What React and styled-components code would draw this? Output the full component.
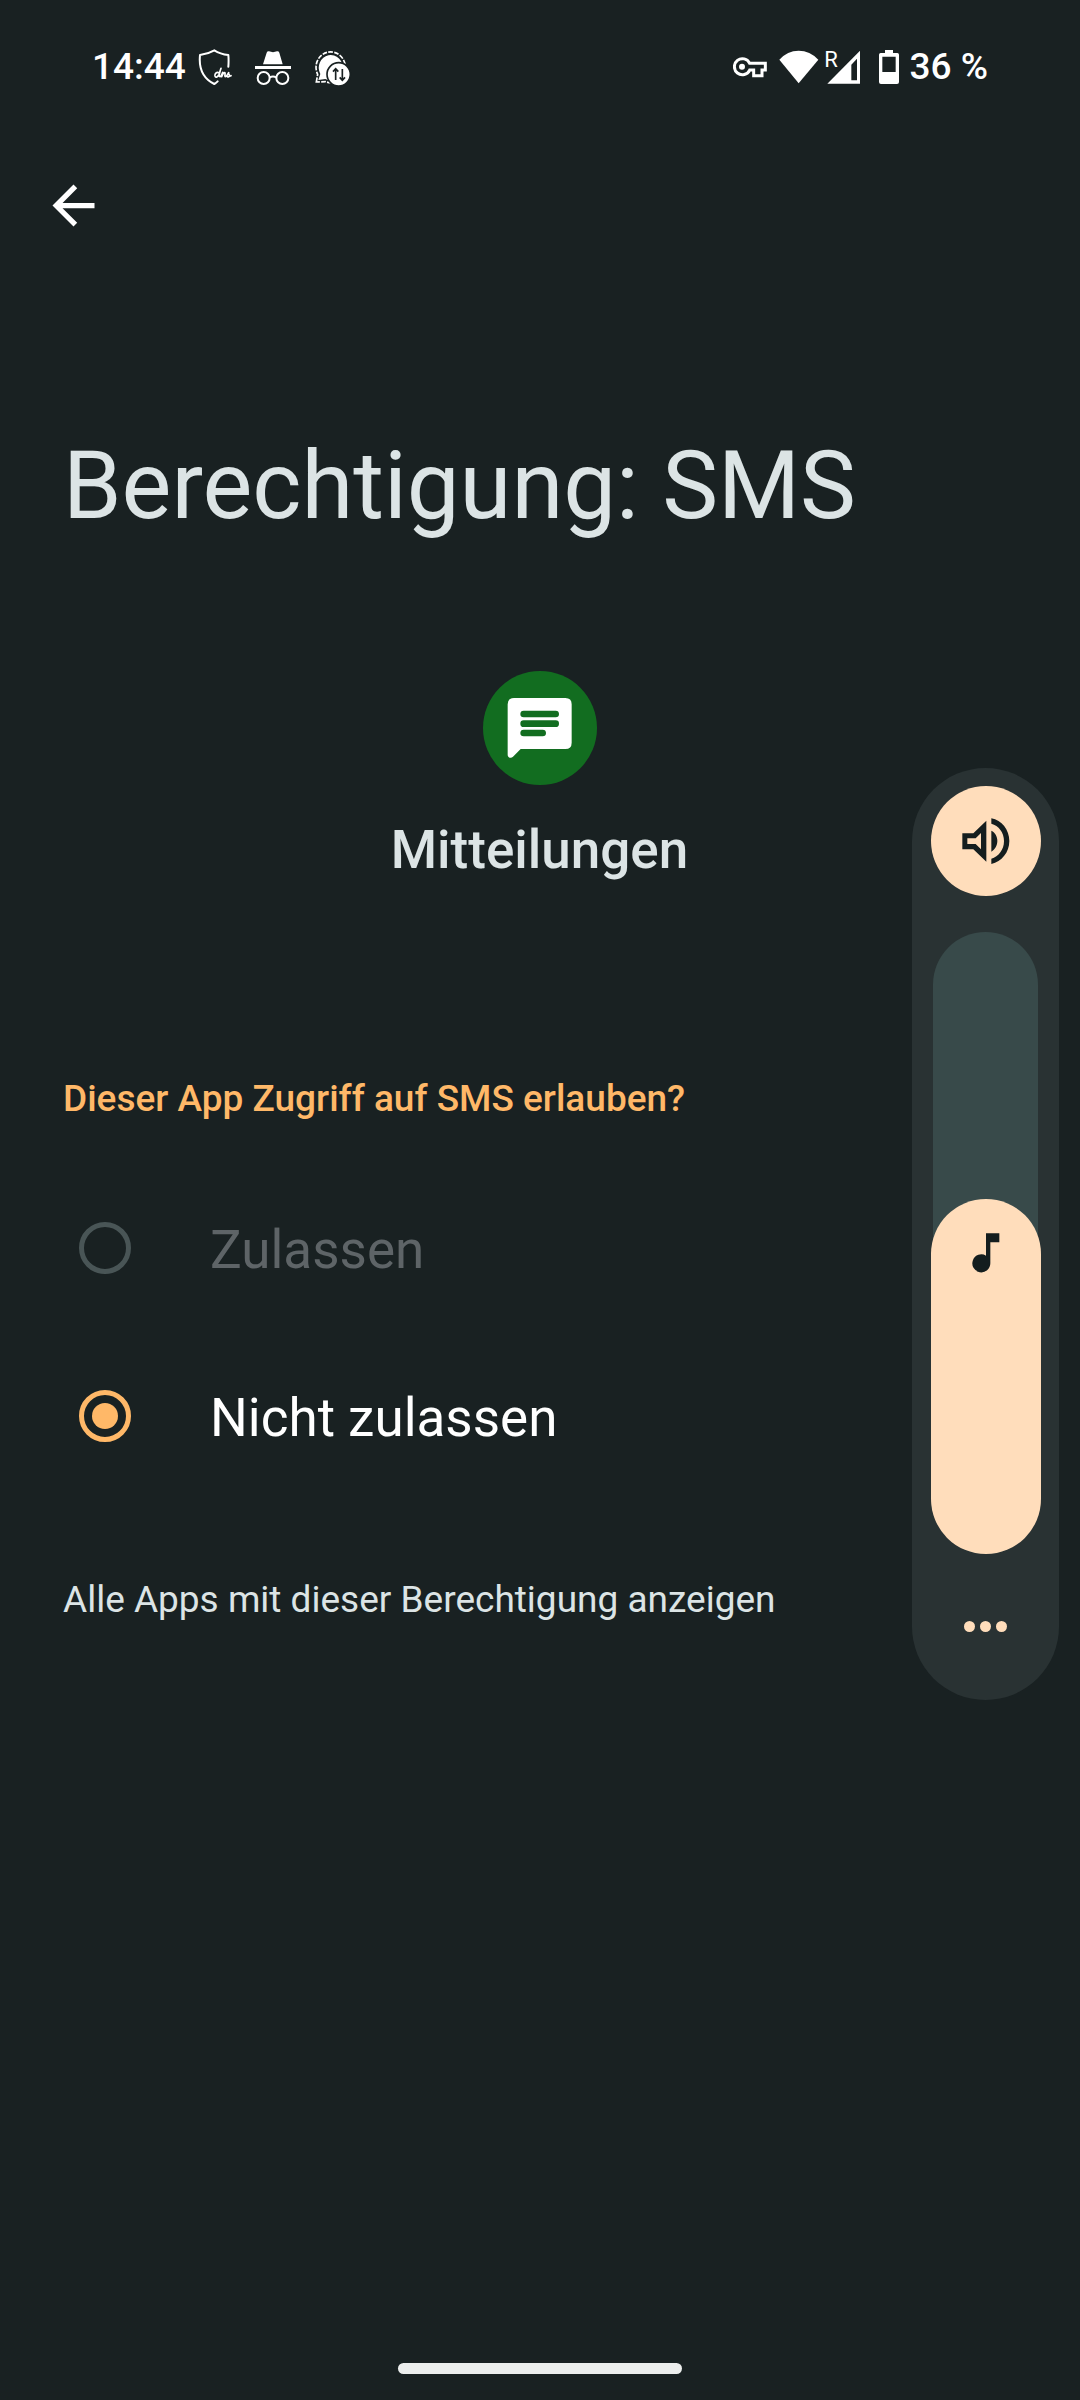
import { useState } from 'react';
import styled, { createGlobalStyle } from 'styled-components';

export default function App() {
  const [permission, setPermission] = useState('deny');
  const [volume, setVolume] = useState(57);

  return (
    <>
      <GlobalStyle />
      <Screen>
        <StatusBar>
          <StatusGroup>
            <StatusText>14:44</StatusText>
            <Notifications>
              <DnsIcon />
              <IncognitoIcon />
              <BackupIcon />
            </Notifications>
          </StatusGroup>
          <StatusGroup>
            <KeyIcon />
            <Network>
              <WifiIcon />
              <SignalIcon />
            </Network>
            <Battery>
              <BatteryIcon />
              <StatusText>36 %</StatusText>
            </Battery>
          </StatusGroup>
        </StatusBar>

        <TopBar>
          <BackButton type="button" aria-label="Zurück">
            <svg width="63" height="63" viewBox="0 0 24 24" fill="currentColor">
              <path d="M20 11H7.83l5.59-5.59L12 4l-8 8 8 8 1.41-1.41L7.83 13H20v-2z" />
            </svg>
          </BackButton>
        </TopBar>

        <Content>
          <Title>Berechtigung: SMS</Title>
          <AppInfo>
            <MessagesIcon />
            <AppName>Mitteilungen</AppName>
          </AppInfo>
          <Permission>
            <Question>Dieser App Zugriff auf SMS erlauben?</Question>
            <Option $disabled>
              <Radio type="radio" name="permission" value="allow" disabled />
              <OptionText>Zulassen</OptionText>
            </Option>
            <Option>
              <Radio
                type="radio"
                name="permission"
                value="deny"
                checked={permission === 'deny'}
                onChange={() => setPermission('deny')}
              />
              <OptionText>Nicht zulassen</OptionText>
            </Option>
          </Permission>
          <AllApps href="#apps">Alle Apps mit dieser Berechtigung anzeigen</AllApps>
        </Content>

        <NavBar>
          <HomeHandle />
        </NavBar>

        <VolumePanel>
          <SoundButton type="button" aria-label="Klingelton">
            <SpeakerIcon />
          </SoundButton>
          <Slider>
            <SliderLevel style={{ height: `${volume}%` }}>
              <NoteIcon />
            </SliderLevel>
            <SliderInput
              type="range"
              aria-label="Medienlautstärke"
              min="18"
              max="100"
              value={volume}
              onChange={(event) => setVolume(Number(event.target.value))}
            />
          </Slider>
          <MoreButton type="button" aria-label="Mehr">
            <Dot />
            <Dot />
            <Dot />
          </MoreButton>
        </VolumePanel>
      </Screen>
    </>
  );
}

function DnsIcon() {
  return (
    <svg width="34" height="38" viewBox="354 56 102 114" fill="none">
      <path
        d="M445 112c1-12 1-24 0-35-17-2-31-7-42-14-12 7-26 12-43 14-4 38 9 70 43 87 4-2 7-5 10-8"
        stroke="#fff"
        strokeWidth="6"
        strokeLinejoin="round"
        strokeLinecap="round"
      />
      <path
        d="M417 130c-8-3-13 4-12 10 2 6 9 3 12-5l6-18c-3 9-8 24-3 25 4 0 6-8 8-13l-3 13c3-7 6-12 9-12 4 1-2 11 2 12 4-1 7-6 10-12-2 6 5 6 2 11-2 3-6 2-7 0 4 2 7 0 12-2"
        stroke="#fff"
        strokeWidth="5"
        strokeLinejoin="round"
        strokeLinecap="round"
      />
    </svg>
  );
}

function IncognitoIcon() {
  return (
    <svg width="38" height="38" viewBox="522 56 114 114">
      <path
        d="M549 105l11-35q2-5 7-4l12 3 12-3q5-1 7 4l10 35zM525 110h108v9H525z"
        fill="#fff"
      />
      <g fill="none" stroke="#fff" strokeWidth="6">
        <circle cx="551" cy="146" r="18" />
        <circle cx="607" cy="146" r="18" />
        <path d="M569 144q10-5 20 0" />
      </g>
    </svg>
  );
}

function BackupIcon() {
  return (
    <svg width="38" height="38" viewBox="700 56 114 114">
      <path
        d="M707 158l4-23a44 46 0 1 1 24 22z"
        fill="none"
        stroke="#fff"
        strokeWidth="5"
        strokeDasharray="14 4"
      />
      <path d="M713 152l6-18a36 38 0 1 1 15 15z" fill="#fff" />
      <circle cx="774" cy="135" r="35" fill="#fff" stroke="#192122" strokeWidth="5" />
      <path
        d="M765 152v-33m-8 8l8-9 8 9M785 119v33m-8-8l8 9 8-9"
        fill="none"
        stroke="#192122"
        strokeWidth="5"
      />
    </svg>
  );
}

function KeyIcon() {
  return (
    <svg width="34" height="22" viewBox="71 81 102 66">
      <path
        d="M121 103a24 24 0 1 0 0 20h12v17h25v-17h10v-20z"
        fill="none"
        stroke="#fff"
        strokeWidth="9"
      />
      <circle cx="98" cy="113" r="9" fill="#fff" />
    </svg>
  );
}

function WifiIcon() {
  return (
    <svg width="40" height="34" viewBox="209 58 120 102">
      <path d="M268 158L210 87q24-27 58-27t59 27z" fill="#fff" />
    </svg>
  );
}

function SignalIcon() {
  return (
    <svg width="38" height="54" viewBox="339 28 114 162">
      <path d="M450 60v99H352zM441 84l-17 18v47h17z" fill="#fff" fillRule="evenodd" />
      <SignalLabel x="343" y="109">
        R
      </SignalLabel>
    </svg>
  );
}

function BatteryIcon() {
  return (
    <svg width="20" height="34" viewBox="507 57 60 102">
      <path
        d="M525 57h24v9h13q5 0 5 5v82q0 6-6 6h-48q-6 0-6-6V71q0-5 5-5h13zM517 77v46h40V77z"
        fill="#fff"
        fillRule="evenodd"
      />
    </svg>
  );
}

function MessagesIcon() {
  return (
    <svg width="114" height="114" viewBox="336 62 342 342">
      <circle cx="507" cy="233" r="171" fill="#126d20" />
      <path
        d="M429 143h154q19 0 19 19v115q0 19-19 19H449l-23 23c-6 6-16 3-16-6V162q0-19 19-19z"
        fill="#fff"
      />
      <path
        d="M458 191h96M458 220h96M458 248h57"
        stroke="#126d20"
        strokeWidth="20"
        strokeLinecap="round"
      />
    </svg>
  );
}

function SpeakerIcon() {
  return (
    <svg width="48" height="46" viewBox="215 202 144 138">
      <path
        d="M216 248h33l39-38v123l-39-37h-33zM231 263v17h25l16 16v-49l-16 16z"
        fill="#141d1e"
        fillRule="evenodd"
      />
      <path
        d="M303 240c12 6 18 18 18 31s-7 26-18 32zM303 203c31 6 54 34 54 68s-23 62-54 69v-16c22-6 38-27 38-53s-16-46-38-52z"
        fill="#141d1e"
      />
    </svg>
  );
}

function NoteIcon() {
  return (
    <svg width="28" height="40" viewBox="245 154 84 120">
      <path d="M287 155h40v27h-27v63a27 27 0 1 1-13-23z" fill="#141d1e" />
    </svg>
  );
}

const GlobalStyle = createGlobalStyle`
  * {
    box-sizing: border-box;
  }
  body {
    background-color: #192122;
    color: #dce4e5;
    font-family: Roboto, sans-serif;
    margin: 0;
  }
  button {
    background: none;
    border: 0;
    color: inherit;
    cursor: pointer;
    padding: 0;
  }
  svg {
    display: block;
    flex-shrink: 0;
  }
`;

const Screen = styled.div`
  display: flex;
  flex-direction: column;
  min-height: 100vh;
  position: relative;
`;

const StatusBar = styled.header`
  align-items: center;
  color: #fff;
  display: flex;
  height: 134px;
  justify-content: space-between;
  padding: 0 92px;
`;

const StatusGroup = styled.div`
  align-items: center;
  display: flex;
  gap: 12px;
`;

const StatusText = styled.span`
  font-size: 37px;
  font-weight: 500;
  line-height: 44px;
`;

const Notifications = styled.div`
  align-items: center;
  display: flex;
  gap: 22px;
`;

const Network = styled.div`
  align-items: center;
  display: flex;
  gap: 4px;
`;

const Battery = styled.div`
  align-items: center;
  display: flex;
  gap: 11px;
  margin-left: 6px;
`;

const SignalLabel = styled.text`
  fill: #fff;
  font-size: 66px;
`;

const TopBar = styled.nav`
  display: flex;
  padding: 40px 42px 0;
`;

const BackButton = styled.button`
  color: #fff;
`;

const Content = styled.main`
  display: flex;
  flex-direction: column;
  padding: 193px 64px 0 63px;
`;

const Title = styled.h1`
  font-size: 94px;
  font-weight: 400;
  line-height: 112px;
  margin: 0;
`;

const AppInfo = styled.section`
  align-items: center;
  display: flex;
  flex-direction: column;
  gap: 35px;
  margin-top: 129px;
`;

const AppName = styled.h2`
  font-size: 53px;
  font-weight: 500;
  line-height: 60px;
  margin: 0;
`;

const Permission = styled.fieldset`
  border: 0;
  margin: 197px 0 0;
  padding: 0;
`;

const Question = styled.legend`
  color: #ffb868;
  font-size: 37px;
  font-weight: 500;
  line-height: 44px;
  margin-bottom: 43px;
  padding: 0;
`;

const Option = styled.label`
  align-items: center;
  color: ${({ $disabled }) => ($disabled ? '#5e6467' : '#fff')};
  display: flex;
  font-size: 53px;
  gap: 79px;
  height: 168px;
  line-height: 60px;
  padding-left: 16px;
`;

const OptionText = styled.span`
  padding-top: 4px;
`;

const Radio = styled.input`
  appearance: none;
  border: 5px solid #ffb868;
  border-radius: 50%;
  display: grid;
  flex-shrink: 0;
  height: 52px;
  margin: 0;
  place-content: center;
  width: 52px;
  &:checked::before {
    background-color: #ffb868;
    border-radius: 50%;
    content: '';
    height: 26px;
    width: 26px;
  }
  &:disabled {
    border-color: #495556;
  }
`;

const AllApps = styled.a`
  align-self: flex-start;
  color: inherit;
  font-size: 37px;
  line-height: 44px;
  margin-top: 78px;
  text-decoration: none;
`;

const NavBar = styled.footer`
  display: flex;
  justify-content: center;
  margin-top: auto;
  padding: 26px;
`;

const HomeHandle = styled.div`
  background-color: #eceeed;
  border-radius: 6px;
  height: 11px;
  width: 284px;
`;

/* floats above the settings page */
const VolumePanel = styled.aside`
  align-items: center;
  background-color: #293233;
  border-radius: 74px;
  display: flex;
  flex-direction: column;
  padding: 18px 18px 42px;
  position: absolute;
  right: 21px;
  top: 768px;
  width: 147px;
`;

const SoundButton = styled.button`
  align-items: center;
  background-color: #ffddbb;
  border-radius: 50%;
  display: flex;
  height: 110px;
  justify-content: center;
  width: 110px;
`;

const Slider = styled.div`
  align-items: center;
  background-color: #384a4a;
  border-radius: 53px;
  display: flex;
  flex-direction: column;
  height: 622px;
  justify-content: flex-end;
  margin-top: 36px;
  position: relative;
  width: 105px;
`;

const SliderLevel = styled.div`
  background-color: #ffddbb;
  border-radius: 55px;
  display: flex;
  justify-content: center;
  padding-top: 34px;
  width: 110px;
`;

const SliderInput = styled.input`
  cursor: pointer;
  direction: rtl;
  height: 100%;
  inset: 0;
  margin: 0;
  opacity: 0;
  position: absolute;
  width: 100%;
  writing-mode: vertical-lr;
`;

const MoreButton = styled.button`
  align-items: center;
  display: flex;
  gap: 5px;
  height: 63px;
  justify-content: center;
  margin-top: 41px;
  width: 110px;
`;

const Dot = styled.span`
  background-color: #ffddbb;
  border-radius: 50%;
  height: 11px;
  width: 11px;
`;
